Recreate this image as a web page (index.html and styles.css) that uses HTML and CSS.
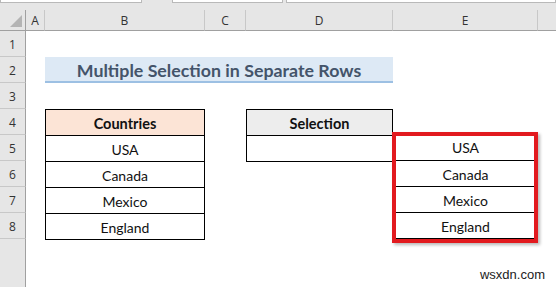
FILE: index.html
```html
<!DOCTYPE html>
<html>
<head>
<meta charset="utf-8">
<link rel="stylesheet" href="styles.css">
</head>
<body>
<div class="app">
  <div class="formula">
    <div class="fbox fbox-name"></div>
    <div class="fbox fbox-mid"></div>
    <div class="fbox fbox-input"></div>
  </div>
  <div class="sheet">
    <div class="ch corner"><span class="tri"></span></div>
    <div class="ch">A</div>
    <div class="ch">B</div>
    <div class="ch">C</div>
    <div class="ch">D</div>
    <div class="ch">E</div>
    <div class="ch ch-last"></div>

    <div class="rh r1">1</div>
    <div class="rh r2">2</div>
    <div class="rh r3">3</div>
    <div class="rh r4">4</div>
    <div class="rh r5">5</div>
    <div class="rh r6">6</div>
    <div class="rh r7">7</div>
    <div class="rh r8">8</div>
    <div class="rh r9"></div>

    <div class="title">Multiple Selection in Separate Rows</div>

    <div class="tbl tbl-b">
      <div class="cell head head-peach">Countries</div>
      <div class="cell">USA</div>
      <div class="cell">Canada</div>
      <div class="cell">Mexico</div>
      <div class="cell">England</div>
    </div>

    <div class="tbl tbl-d">
      <div class="cell head head-gray">Selection</div>
      <div class="cell"></div>
    </div>

    <div class="tbl tbl-e">
      <div class="cell">USA</div>
      <div class="cell">Canada</div>
      <div class="cell">Mexico</div>
      <div class="cell">England</div>
      <div class="highlight"></div>
    </div>
  </div>
  <div class="watermark">wsxdn.com</div>
</div>
</body>
</html>
```

FILE: styles.css
```css
* { box-sizing: border-box; }
html, body { margin: 0; padding: 0; }
body {
  width: 556px;
  height: 287px;
  overflow: hidden;
  background: #ffffff;
  font-family: "Lato", "Open Sans", sans-serif;
}
.app {
  position: relative;
  width: 556px;
  height: 287px;
  display: flex;
  flex-direction: column;
}
.formula {
  height: 10px;
  background: #e6e6e6;
  display: flex;
  align-items: flex-start;
}
.fbox {
  height: 3px;
  background: #ffffff;
  border: 1px solid #b9b9b9;
  border-top: none;
}
.fbox-name { width: 142px; }
.fbox-mid { width: 111px; margin-left: 30px; }
.fbox-input { flex: 1; margin-left: 3px; }

.sheet {
  flex: 1;
  display: grid;
  grid-template-columns: 26px 19px 160px 41px 147px 145px 1fr;
  grid-template-rows: 21px repeat(8, 26px) 1fr;
}
.ch {
  background: #e6e6e6;
  border-right: 1px solid #c8c8c8;
  border-bottom: 1px solid #a0a0a0;
  font-family: "Open Sans", sans-serif;
  font-size: 12px;
  color: #333;
  display: flex;
  align-items: center;
  justify-content: center;
  padding-top: 1px;
}
.ch-last { border-right: none; }
.corner {
  position: relative;
  border-right: 1px solid #a0a0a0;
}
.tri {
  position: absolute;
  left: 10px;
  top: 5px;
  width: 0;
  height: 0;
  border-left: 12px solid transparent;
  border-bottom: 12px solid #b4b4b4;
}
.rh {
  grid-column: 1;
  background: #e6e6e6;
  border-right: 1px solid #a0a0a0;
  border-bottom: 1px solid #c8c8c8;
  font-family: "Open Sans", sans-serif;
  font-size: 12px;
  color: #333;
  display: flex;
  align-items: center;
  justify-content: center;
  padding-top: 2px;
}
.r9 { border-bottom: none; }

.title {
  grid-column: 3 / 6;
  grid-row: 3;
  background: #dde9f5;
  border-bottom: 2px solid #9dc0e3;
  color: #44546a;
  font-weight: 700;
  font-size: 17.8px;
  display: flex;
  align-items: center;
  justify-content: center;
  padding-top: 1px;
}

.tbl {
  position: relative;
  border: 1px solid #000;
  border-bottom: none;
  display: flex;
  flex-direction: column;
  align-self: start;
}
.tbl-b { grid-column: 3; grid-row: 5 / 10; }
.tbl-d { grid-column: 5; grid-row: 5 / 7; }
.tbl-e { grid-column: 6; grid-row: 6 / 10; border-top: none; margin-top: -1px; }
.tbl-e .cell:first-child { height: 27px; }

.cell {
  height: 26px;
  border-bottom: 1px solid #000;
  display: flex;
  align-items: center;
  justify-content: center;
  font-size: 14px;
  color: #111;
  padding-top: 1px;
}
.head { font-weight: 700; font-size: 14.5px; }
.head-peach { background: #fce4d6; }
.head-gray { background: #ededed; }

.highlight {
  position: absolute;
  left: -2px;
  right: -1px;
  top: -2px;
  bottom: -4px;
  border: 4px solid #e21a1f;
  box-shadow: 2px 2px 3px rgba(0, 0, 0, 0.28);
}

.watermark {
  position: absolute;
  right: 11px;
  bottom: 5px;
  font-family: "Liberation Sans", Arial, sans-serif;
  font-size: 13px;
  color: #222;
}
```
